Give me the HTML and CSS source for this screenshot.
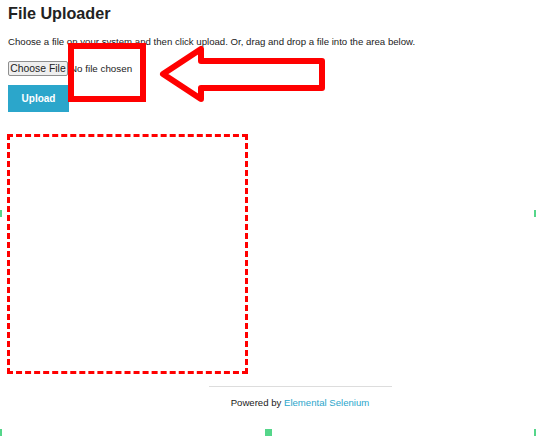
FILE: index.html
```html
<!DOCTYPE html>
<html>
<head>
<meta charset="utf-8">
<link rel="stylesheet" href="styles.css">
</head>
<body>
<div class="page">
  <div class="content">
    <h3 class="title">File Uploader</h3>
    <p class="intro">Choose a file on your system and then click upload. Or, drag and drop a file into the area below.</p>
    <div class="file-row">
      <span class="choose-btn">Choose File</span>
      <span class="file-status">No file chosen</span>
    </div>
    <button class="upload-btn">Upload</button>
    <div class="drop-area"></div>
  </div>
  <div class="footer">
    <hr class="footer-rule">
    <div class="footer-text">Powered by <a class="footer-link" href="#">Elemental Selenium</a></div>
  </div>
</div>

<svg class="annotation" width="536" height="436" viewBox="0 0 536 436">
  <rect x="71" y="46" width="72" height="53" fill="none" stroke="#ff0000" stroke-width="6"/>
  <polygon points="163,74 201,49 201,61 322,61 322,88 201,88 201,99" fill="none" stroke="#ff0000" stroke-width="6" stroke-linejoin="round"/>
</svg>

<span class="handle handle-l"></span>
<span class="handle handle-r"></span>
<span class="handle handle-bl"></span>
<span class="handle handle-bc"></span>
<span class="handle handle-br"></span>
</body>
</html>
```

FILE: styles.css
```css
html, body {
  margin: 0;
  padding: 0;
  background: #ffffff;
}

body {
  font-family: "Liberation Sans", Arial, sans-serif;
  color: #222222;
  width: 536px;
  height: 436px;
  overflow: hidden;
  position: relative;
}

.page {
  padding: 0 8px;
}

.content {
  display: flex;
  flex-direction: column;
  align-items: flex-start;
}

.title {
  margin: 2px 0 0 0;
  font-size: 16.2px;
  font-weight: bold;
  line-height: 22px;
  color: #222222;
}

.intro {
  margin: 11px 0 0 0;
  font-size: 9.65px;
  line-height: 14px;
  color: #222222;
}

.file-row {
  display: flex;
  align-items: center;
  margin-top: 12px;
}

.choose-btn {
  display: inline-block;
  box-sizing: border-box;
  width: 60px;
  height: 15px;
  line-height: 13px;
  text-align: center;
  background: #efefef;
  border: 1px solid #8f8f8f;
  border-radius: 2px;
  color: #222222;
  font-size: 10.4px;
}

.file-status {
  margin-left: 2px;
  color: #222222;
  font-size: 9.8px;
}

.upload-btn {
  margin-top: 9px;
  width: 61px;
  height: 27px;
  border: none;
  background: #2ba6cb;
  color: #ffffff;
  font-family: "Liberation Sans", Arial, sans-serif;
  font-weight: bold;
  font-size: 10px;
  padding: 0;
}

.drop-area {
  margin-top: 22px;
  margin-left: -1px;
  width: 241px;
  height: 240px;
  box-sizing: border-box;
  border: 3px dashed #ff0000;
}

.footer {
  display: flex;
  flex-direction: column;
  align-items: center;
  margin-top: 12px;
  margin-left: 64px;
}

.footer-rule {
  width: 183px;
  margin: 0;
  border: none;
  border-top: 1px solid #dddddd;
}

.footer-text {
  margin-top: 9px;
  font-size: 9.6px;
  line-height: 14px;
  color: #222222;
}

.footer-link {
  color: #2ba6cb;
  text-decoration: none;
}

.annotation {
  position: absolute;
  left: 0;
  top: 0;
  pointer-events: none;
}

.handle {
  position: absolute;
  background: #55d68a;
}

.handle-l { left: 0; top: 210px; width: 2px; height: 7px; }
.handle-r { right: 0; top: 210px; width: 2px; height: 7px; }
.handle-bl { left: 0; top: 429px; width: 2px; height: 7px; }
.handle-br { right: 0; top: 429px; width: 2px; height: 7px; }
.handle-bc { left: 265px; top: 429px; width: 7px; height: 7px; }
```
